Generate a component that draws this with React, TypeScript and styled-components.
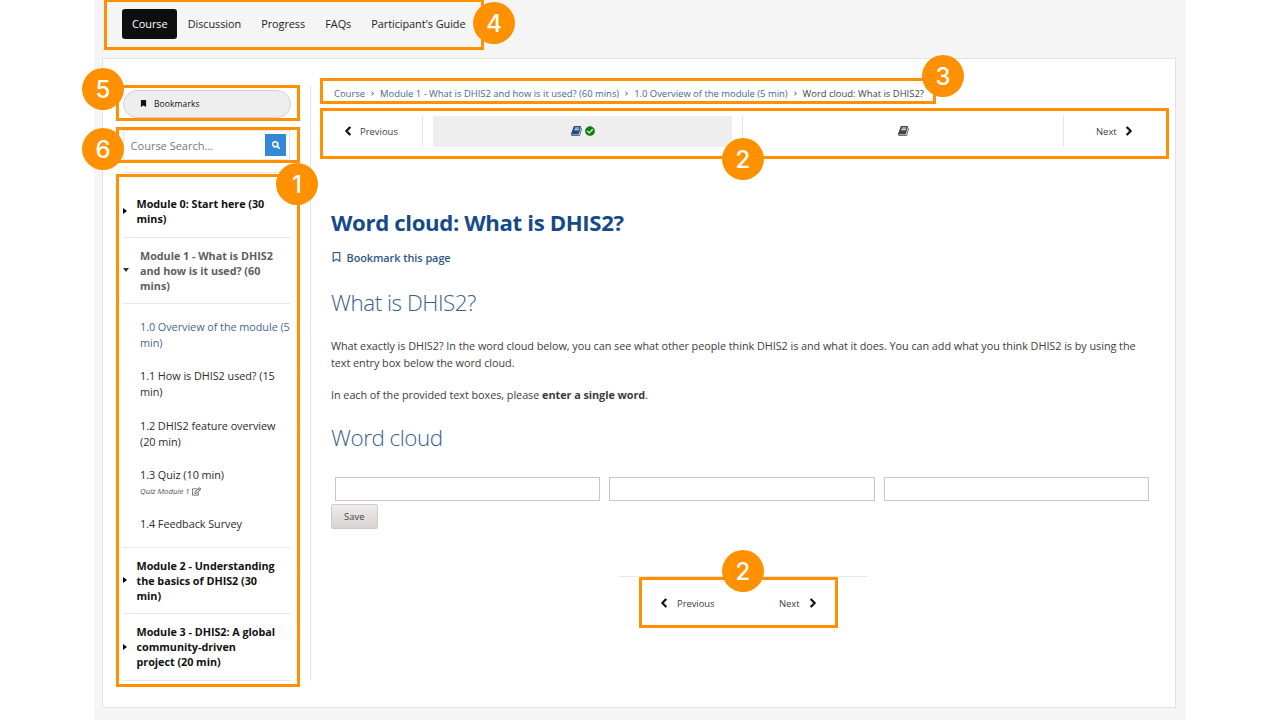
import React from "react";
import styled, { createGlobalStyle } from "styled-components";
import {
  FaBookmark,
  FaCheckCircle,
  FaChevronLeft,
  FaChevronRight,
  FaRegBookmark,
  FaRegEdit,
  FaSearch,
} from "react-icons/fa";

const ORANGE = "#ff9100";
const LINE = "#e7e7e7";

const GlobalStyle = createGlobalStyle`
  * { box-sizing: border-box; }
  body {
    margin: 0;
    background: #fff;
    color: #3c3c3c;
    font-family: "Open Sans", sans-serif;
    overflow: hidden;
  }
  h1, h2, p { margin: 0; }
`;

const Page = styled.div`
  position: relative;
  width: 1280px;
  height: 720px;
  overflow: hidden;
`;

const Shell = styled.div`
  width: 1092px;
  height: 720px;
  margin-left: 94px;
  padding: 9px 10px 0 8px;
  background: #f5f5f5;
`;

const Tabs = styled.nav`
  display: flex;
  height: 30px;
  margin: 0 0 19px 20px;
`;

const Tab = styled.a<{ $active?: boolean }>`
  display: flex;
  align-items: center;
  padding: 0 10px 2px;
  margin-right: 0.2px;
  border-radius: 3px;
  font-size: 10.9px;
  letter-spacing: -0.07px;
  color: ${(p) => (p.$active ? "#fff" : "#222")};
  background: ${(p) => (p.$active ? "#0e0e0e" : "transparent")};
`;

const Card = styled.div`
  display: flex;
  height: 650px;
  padding: 27px 0 0 20px;
  border: 1px solid #e2e2e2;
  background: #fff;
`;

const Sidebar = styled.aside`
  flex: none;
  width: 188px;
  height: 595px;
  padding: 4px 20px 0 0;
  border-right: 1px solid #e2e2e2;
`;

const BookmarksButton = styled.button`
  display: flex;
  align-items: center;
  gap: 7px;
  width: 167.5px;
  height: 28px;
  padding: 0 0 1px 16px;
  border: 1px solid #d2d2d2;
  border-radius: 14px;
  background: #eee;
  font: 8.5px "Open Sans", sans-serif;
  letter-spacing: 0.1px;
  color: #111;
`;

const SearchBox = styled.div`
  display: flex;
  align-items: center;
  justify-content: space-between;
  width: 167px;
  height: 30px;
  margin-top: 12px;
  padding: 0 3px 0 6.6px;
  border: 1px solid ${LINE};
  font-size: 11px;
  color: #777;
`;

const SearchButton = styled.span`
  display: flex;
  align-items: center;
  justify-content: center;
  width: 21px;
  height: 22px;
  background: #3488d8;
  color: #fff;
  font-size: 8px;
  svg { stroke: currentColor; stroke-width: 30px; }
`;

const Outline = styled.div`
  width: 167px;
  margin-top: 12px;
  border-top: 1px solid ${LINE};
`;

const ModuleRow = styled.div<{ $open?: boolean; $height: number; $top?: number }>`
  display: flex;
  align-items: center;
  gap: ${(p) => (p.$open ? "10px" : "9.5px")};
  height: ${(p) => p.$height}px;
  padding: ${(p) => (p.$top ? `${p.$top}px 0 0` : "0 0 0.4px")};
  border-bottom: 1px solid ${LINE};
  font-size: 10.8px;
  font-weight: 700;
  letter-spacing: -0.03px;
  line-height: 15.2px;
  color: ${(p) => (p.$open ? "#5e5e5e" : "#111")};
  white-space: pre;
`;

const Caret = styled.span<{ $down?: boolean }>`
  flex: none;
  border: 3px solid transparent;
  ${(p) =>
    p.$down
      ? "border-top: 4px solid #333; border-bottom: 0; width: 6px; margin-right: 1px;"
      : "border-left: 4px solid #000; border-right: 0; height: 6px;"}
`;

const Lessons = styled.div`
  display: flex;
  flex-direction: column;
  gap: 17.1px;
  height: 244px;
  padding: 15.4px 0 0 17px;
  border-bottom: 1px solid ${LINE};
`;

const Lesson = styled.div<{ $current?: boolean }>`
  font-size: 10.85px;
  letter-spacing: -0.05px;
  line-height: 16px;
  white-space: pre;
  color: ${(p) => (p.$current ? "#3f6a94" : "#2b2b2b")};
`;

const LessonNote = styled.div`
  display: flex;
  align-items: center;
  gap: 2px;
  height: 16px;
  padding-top: 1px;
  font-size: 7.9px;
  font-style: italic;
  color: #555;
`;

const Main = styled.main`
  flex: none;
  width: 860px;
  padding-left: 9px;
`;

const Crumbs = styled.div`
  display: flex;
  align-items: center;
  height: 18px;
  margin-top: -2px;
  padding-left: 14px;
  font-size: 9.45px;
  letter-spacing: -0.01px;
  color: #46688c;
  white-space: pre;
`;

const Angle = styled(FaChevronRight)`
  width: 5px;
  height: 5px;
  margin: 0 5px;
  color: #666;
`;

const Here = styled.span`
  color: #444;
`;

const Sequence = styled.div`
  display: flex;
  height: 32px;
  margin-top: 13px;
`;

const Step = styled.span<{ $width: number; $divided?: boolean; $indent: number }>`
  display: flex;
  align-items: center;
  gap: 8px;
  width: ${(p) => p.$width}px;
  padding-left: ${(p) => p.$indent}px;
  border-right: ${(p) => (p.$divided ? `1px solid ${LINE}` : "0")};
  font-size: 9.45px;
  svg {
    width: 8px;
    height: 10px;
    color: #111;
    stroke: currentColor;
    stroke-width: 40px;
  }
`;

const Unit = styled.span<{ $active?: boolean; $width: number }>`
  display: flex;
  align-items: center;
  justify-content: center;
  gap: 3px;
  width: ${(p) => p.$width}px;
  ${(p) =>
    p.$active
      ? "margin: 1px 10px 0; padding-bottom: 1px; background: #eee; color: #1d4b82;"
      : `border: solid ${LINE}; border-width: 0 1px; color: #444;`}
`;

const Done = styled(FaCheckCircle)`
  width: 10px;
  height: 10px;
  color: #0b800b;
`;

const Content = styled.article`
  padding-left: 11px;
  font-size: 10.85px;
  letter-spacing: -0.05px;
  line-height: 17px;
`;

const Title = styled.h1`
  margin-top: 60px;
  font-size: 22.2px;
  font-weight: 700;
  letter-spacing: -0.37px;
  line-height: 32px;
  color: #154b88;
`;

const BookmarkLink = styled.a`
  display: flex;
  align-items: center;
  gap: 4.5px;
  height: 18px;
  margin-top: 9px;
  font-size: 10.9px;
  font-weight: 600;
  color: #2c5686;
  svg { width: 11px; height: 10px; stroke: currentColor; stroke-width: 12px; }
`;

const Heading = styled.h2<{ $top: number }>`
  margin-top: ${(p) => p.$top}px;
  font-size: 22.4px;
  font-weight: 300;
  letter-spacing: -0.47px;
  line-height: 32px;
  color: #3b5f8b;
`;

const Text = styled.p<{ $top: number }>`
  margin-top: ${(p) => p.$top}px;
  white-space: pre;
`;

const Inputs = styled.div`
  display: flex;
  gap: 9.5px;
  margin: 23px 0 3px 3.5px;
`;

const Input = styled.input`
  width: 265.3px;
  height: 24px;
  border: 1px solid #c8c8c8;
  background: #fff;
`;

const Save = styled.button`
  display: block;
  width: 46.5px;
  height: 25px;
  padding: 0 0 1px;
  border: 1px solid #d0c9c9;
  border-radius: 2px;
  background: linear-gradient(#eeecec, #d9d2d2);
  font: 9.4px "Open Sans", sans-serif;
  color: #444;
`;

const Pager = styled.div`
  display: flex;
  width: 248px;
  height: 54px;
  margin: 46.5px 0 0 288px;
  padding-left: 41px;
  border-top: 1px solid ${LINE};
`;

const PagerStep = styled(Step)`
  gap: 9px;
`;

const Callout = styled.div<{ $x: number; $y: number; $w: number; $h: number }>`
  position: absolute;
  left: ${(p) => p.$x}px;
  top: ${(p) => p.$y}px;
  width: ${(p) => p.$w}px;
  height: ${(p) => p.$h}px;
  border: 3px solid ${ORANGE};
`;

const Badge = styled.div<{ $x: number; $y: number }>`
  position: absolute;
  left: ${(p) => p.$x - 21}px;
  top: ${(p) => p.$y - 21}px;
  display: flex;
  align-items: center;
  justify-content: center;
  width: 42px;
  height: 42px;
  border-radius: 50%;
  background: ${ORANGE};
  color: #fff;
  font: 450 24px Inter, sans-serif;
`;

function Book() {
  return (
    <svg width="11" height="12" viewBox="0 0 1664 1792" fill="currentColor">
      <path d="M1639 478q40 57 18 129l-275 906q-19 64-76.5 107.5t-122.5 43.5h-923q-77 0-148.5-53.5t-99.5-131.5q-24-67-2-127 0-4 3-27t4-37q1-8-3-21.5t-3-19.5q2-11 8-21t16.5-23.5 16.5-23.5q23-38 45-91.5t30-91.5q3-10 .5-30t-.5-28q3-11 17-28t17-23q21-36 42-92t25-90q1-9-2.5-32t.5-28q4-13 22-30.5t22-22.5q19-26 42.5-84.5t27.5-96.5q1-8-3-25.5t-2-26.5q2-8 9-18t18-23 17-21q8-12 16.5-30.5t15-35 16-36 19.5-32 26.5-23.5 36-11.5 47.5 5.5l-1 3q38-9 51-9h761q74 0 114 56t18 130l-274 906q-36 119-71.5 153.5t-128.5 34.5h-869q-27 0-38 15-11 16-1 43 24 70 144 70h923q29 0 56-15.5t35-41.5l300-987q7-22 5-57 38 15 59 43zm-1064 2q-4 13 2 22.5t20 9.5h608q13 0 25.5-9.5t16.5-22.5l21-64q4-13-2-22.5t-20-9.5h-608q-13 0-25.5 9.5t-16.5 22.5zm-83 256q-4 13 2 22.5t20 9.5h608q13 0 25.5-9.5t16.5-22.5l21-64q4-13-2-22.5t-20-9.5h-608q-13 0-25.5 9.5t-16.5 22.5z" />
    </svg>
  );
}

const callouts = [
  { x: 104, y: -1, w: 380, h: 51 },
  { x: 116, y: 85, w: 184, h: 36 },
  { x: 116, y: 127, w: 184, h: 36 },
  { x: 116, y: 174, w: 184, h: 513 },
  { x: 320, y: 78, w: 616, h: 26 },
  { x: 320, y: 108, w: 849, h: 51 },
  { x: 639, y: 577, w: 199, h: 51 },
];

const badges = [
  { n: 4, x: 494, y: 23 },
  { n: 5, x: 103, y: 89 },
  { n: 6, x: 103, y: 149 },
  { n: 1, x: 297, y: 184 },
  { n: 3, x: 943, y: 76 },
  { n: 2, x: 743, y: 159 },
  { n: 2, x: 743, y: 571 },
];

export default function App() {
  return (
    <Page>
      <GlobalStyle />
      <Shell>
        <Tabs>
          <Tab $active>Course</Tab>
          <Tab>Discussion</Tab>
          <Tab>Progress</Tab>
          <Tab>FAQs</Tab>
          <Tab>Participant's Guide</Tab>
        </Tabs>
        <Card>
          <Sidebar>
            <BookmarksButton>
              <FaBookmark size={7} />
              Bookmarks
            </BookmarksButton>
            <SearchBox>
              Course Search...
              <SearchButton>
                <FaSearch />
              </SearchButton>
            </SearchBox>
            <Outline>
              <ModuleRow $height={65} $top={12.5}>
                <Caret />
                {"Module 0: Start here (30\nmins)"}
              </ModuleRow>
              <ModuleRow $height={66} $open>
                <Caret $down />
                {"Module 1 - What is DHIS2\nand how is it used? (60\nmins)"}
              </ModuleRow>
              <Lessons>
                <Lesson $current>{"1.0 Overview of the module (5\nmin)"}</Lesson>
                <Lesson>{"1.1 How is DHIS2 used? (15\nmin)"}</Lesson>
                <Lesson>{"1.2 DHIS2 feature overview\n(20 min)"}</Lesson>
                <Lesson>
                  1.3 Quiz (10 min)
                  <LessonNote>
                    Quiz Module 1
                    <FaRegEdit size={9} />
                  </LessonNote>
                </Lesson>
                <Lesson>1.4 Feedback Survey</Lesson>
              </Lessons>
              <ModuleRow $height={66}>
                <Caret />
                {"Module 2 - Understanding\nthe basics of DHIS2 (30\nmin)"}
              </ModuleRow>
              <ModuleRow $height={67}>
                <Caret />
                {"Module 3 - DHIS2: A global\ncommunity-driven\nproject (20 min)"}
              </ModuleRow>
            </Outline>
          </Sidebar>
          <Main>
            <Crumbs>
              Course
              <Angle />
              Module 1 - What is DHIS2 and how is it used? (60 mins)
              <Angle />
              1.0 Overview of the module (5 min)
              <Angle />
              <Here>Word cloud: What is DHIS2?</Here>
            </Crumbs>
            <Sequence>
              <Step $width={103} $indent={24} $divided>
                <FaChevronLeft />
                Previous
              </Step>
              <Unit $active $width={299}>
                <Book />
                <Done />
              </Unit>
              <Unit $width={322}>
                <Book />
              </Unit>
              <Step $width={100} $indent={32}>
                Next
                <FaChevronRight />
              </Step>
            </Sequence>
            <Content>
              <Title>Word cloud: What is DHIS2?</Title>
              <BookmarkLink>
                <FaRegBookmark />
                Bookmark this page
              </BookmarkLink>
              <Heading $top={21}>What is DHIS2?</Heading>
              <Text $top={18}>
                {
                  "What exactly is DHIS2? In the word cloud below, you can see what other people think DHIS2 is and what it does. You can add what you think DHIS2 is by using the\ntext entry box below the word cloud."
                }
              </Text>
              <Text $top={15}>
                In each of the provided text boxes, please <b>enter a single word</b>.
              </Text>
              <Heading $top={19}>Word cloud</Heading>
              <Inputs>
                <Input />
                <Input />
                <Input />
              </Inputs>
              <Save>Save</Save>
              <Pager>
                <PagerStep $width={119} $indent={0}>
                  <FaChevronLeft />
                  Previous
                </PagerStep>
                <PagerStep $width={60} $indent={0}>
                  Next
                  <FaChevronRight />
                </PagerStep>
              </Pager>
            </Content>
          </Main>
        </Card>
      </Shell>
      {callouts.map((c, i) => (
        <Callout key={i} $x={c.x} $y={c.y} $w={c.w} $h={c.h} />
      ))}
      {badges.map((b, i) => (
        <Badge key={i} $x={b.x} $y={b.y}>
          {b.n}
        </Badge>
      ))}
    </Page>
  );
}
